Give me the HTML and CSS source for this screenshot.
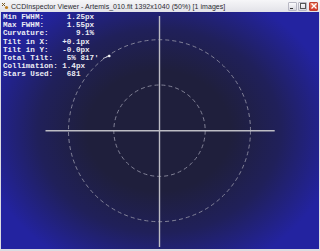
FILE: index.html
```html
<!DOCTYPE html>
<html lang="en">
<head>
    <meta charset="UTF-8">
    <title>CCDInspector Viewer</title>
    <link rel="stylesheet" href="styles.css">
</head>
<body>
    <div class="window">
        <div class="titlebar">
            <svg class="app-icon" width="8" height="8" viewBox="0 0 8 8">
                <path d="M1 1 L4 4 M4 1 L1 4" stroke="#7a5a20" stroke-width="1"/>
                <circle cx="5.5" cy="5.5" r="1.6" fill="#c08020"/>
            </svg>
            <span class="title">CCDInspector Viewer - Artemis_010.fit 1392x1040 (50%) [1 images]</span>
            <div class="controls">
                <span class="ctl ctl-min"><i></i></span>
                <span class="ctl ctl-max"><i></i></span>
                <span class="ctl ctl-close">
                    <svg width="6" height="6" viewBox="0 0 6 6"><path d="M0.5 0.5 L5.5 5.5 M5.5 0.5 L0.5 5.5" stroke="#fff" stroke-width="1.3"/></svg>
                </span>
            </div>
        </div>
        <div class="viewer">
            <svg class="chart" width="318" height="237" viewBox="0 0 318 237">
                <circle class="ring" cx="158.5" cy="118.7" r="91"/>
                <circle class="ring" cx="158.5" cy="118.7" r="45.7"/>
                <line class="axis" x1="44.5" y1="118.7" x2="273.7" y2="118.7"/>
                <line class="axis" x1="158.5" y1="4" x2="158.5" y2="235"/>
                <line class="tilt" x1="102" y1="46.5" x2="108" y2="44"/>
                <circle cx="108.3" cy="44" r="1.3" fill="#f4f4f8"/>
            </svg>
            <pre class="stats">Min FWHM:     1.25px
Max FWHM:     1.55px
Curvature:      9.1%
Tilt in X:   +0.1px
Tilt in Y:   -0.0px
Total Tilt:   5% 817'
Collimation: 1.4px
Stars Used:   681</pre>
        </div>
    </div>
</body>
</html>
```

FILE: styles.css
```css
html, body {
    margin: 0;
    padding: 0;
    background: #dcdce2;
}
.window {
    width: 320px;
    height: 251px;
    display: flex;
    flex-direction: column;
    overflow: hidden;
}
.titlebar {
    height: 12px;
    display: flex;
    align-items: center;
    gap: 2px;
    padding: 0 2px 0 1px;
    background: linear-gradient(#f6f6f8, #e2e2e8);
    font-family: "Liberation Sans", Arial, sans-serif;
    font-size: 7px;
    color: #2a2a30;
    flex: none;
}
.title {
    white-space: nowrap;
    flex: 1;
    letter-spacing: 0.05px;
}
.controls {
    display: flex;
    gap: 1px;
}
.ctl {
    width: 9px;
    height: 9px;
    border-radius: 1px;
    box-sizing: border-box;
    border: 1px solid #b8b8c4;
    background: linear-gradient(#fbfbfd, #d6d6de);
    display: flex;
    align-items: center;
    justify-content: center;
}
.ctl-min i {
    width: 3px;
    height: 1px;
    background: #333;
    margin-top: 4px;
    margin-left: -2px;
}
.ctl-max i {
    width: 4px;
    height: 4px;
    border: 1px solid #555;
}
.ctl-close {
    border-color: #c04030;
    background: linear-gradient(#f08060, #d03828);
    margin-left: 1px;
}
.viewer {
    flex: 1;
    display: grid;
    margin: 0 1px 2px 1px;
    background: radial-gradient(ellipse 178px 150px at 158px 119px, #1f1f3c 40%, #20205a 68%, #2323a0 100%);
}
.chart, .stats {
    grid-area: 1 / 1;
}
.ring {
    fill: none;
    stroke: #8c8ca0;
    stroke-width: 0.9;
    stroke-dasharray: 4 3;
}
.axis {
    stroke: #bcbcc4;
    stroke-width: 1.4;
}
.tilt {
    stroke: #e8e8ee;
    stroke-width: 0.8;
}
.stats {
    margin: 0;
    padding: 1px 0 0 2px;
    font-family: "Liberation Mono", "Courier New", monospace;
    font-weight: bold;
    font-size: 7.6px;
    line-height: 8.2px;
    color: #ececf4;
    align-self: start;
    justify-self: start;
}
```
